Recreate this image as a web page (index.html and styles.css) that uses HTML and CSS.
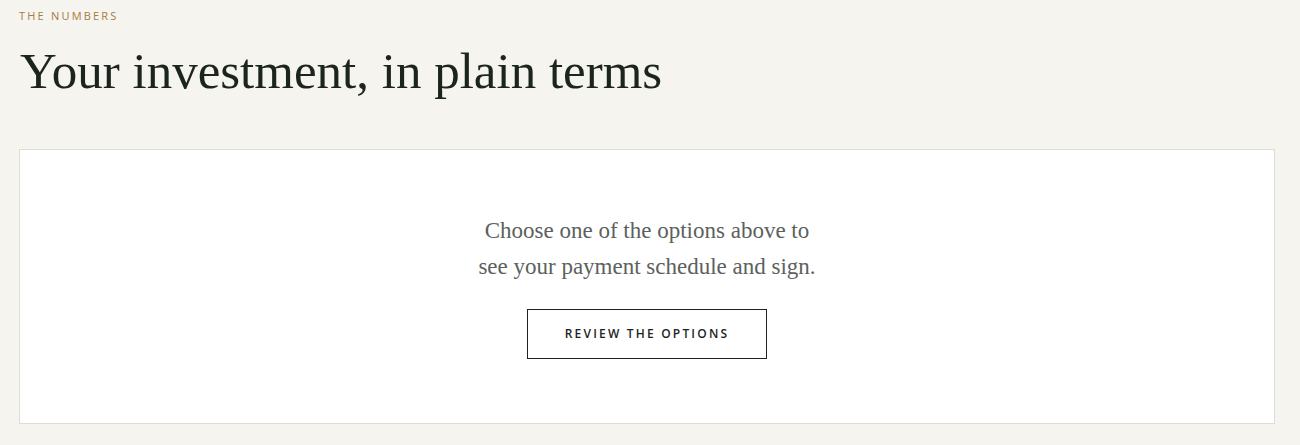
FILE: index.html
```html
<!DOCTYPE html>
<html lang="en">
  <head>
    <meta charset="UTF-8" />
    <meta name="viewport" content="width=device-width, initial-scale=1.0" />
    <title>The numbers</title>
    <link rel="stylesheet" href="styles.css">
  </head>
  <body>
    <section class="numbers">
      <div class="eyebrow">The numbers</div>
      <h1 class="title">Your investment, in plain terms</h1>
      <div class="card">
        <p class="hint">Choose one of the options above to<br>see your payment schedule and sign.</p>
        <a class="btn" href="#options">Review the options</a>
      </div>
    </section>
  </body>
</html>
```

FILE: styles.css
```css
body {
  margin: 0;
  background: #f5f4ef;
  color: #1c241e;
  font-family: "Liberation Serif", "Times New Roman", serif;
}
.numbers {
  max-width: 1256px;
  padding: 9px 0 0 19px;
}
.eyebrow {
  font-family: "Open Sans", "Liberation Sans", sans-serif;
  font-size: 11px;
  letter-spacing: 2.2px;
  text-transform: uppercase;
  color: #a57c42;
  line-height: 14px;
}
.title {
  margin: 18px 0 0 1px;
  font-size: 51px;
  font-weight: normal;
  line-height: 60px;
}
.card {
  margin-top: 48px;
  background: #fff;
  border: 1px solid #dedcd6;
  padding: 63px 20px 64px;
  text-align: center;
}
.hint {
  margin: 0 0 24px;
  font-size: 23px;
  line-height: 36px;
  color: #5c615c;
}
.btn {
  display: inline-block;
  width: 240px;
  height: 50px;
  box-sizing: border-box;
  border: 1px solid #1c241e;
  line-height: 48px;
  font-family: "Open Sans", "Liberation Sans", sans-serif;
  font-size: 12px;
  font-weight: 600;
  letter-spacing: 2.2px;
  text-transform: uppercase;
  text-decoration: none;
  color: #1c241e;
}
```
